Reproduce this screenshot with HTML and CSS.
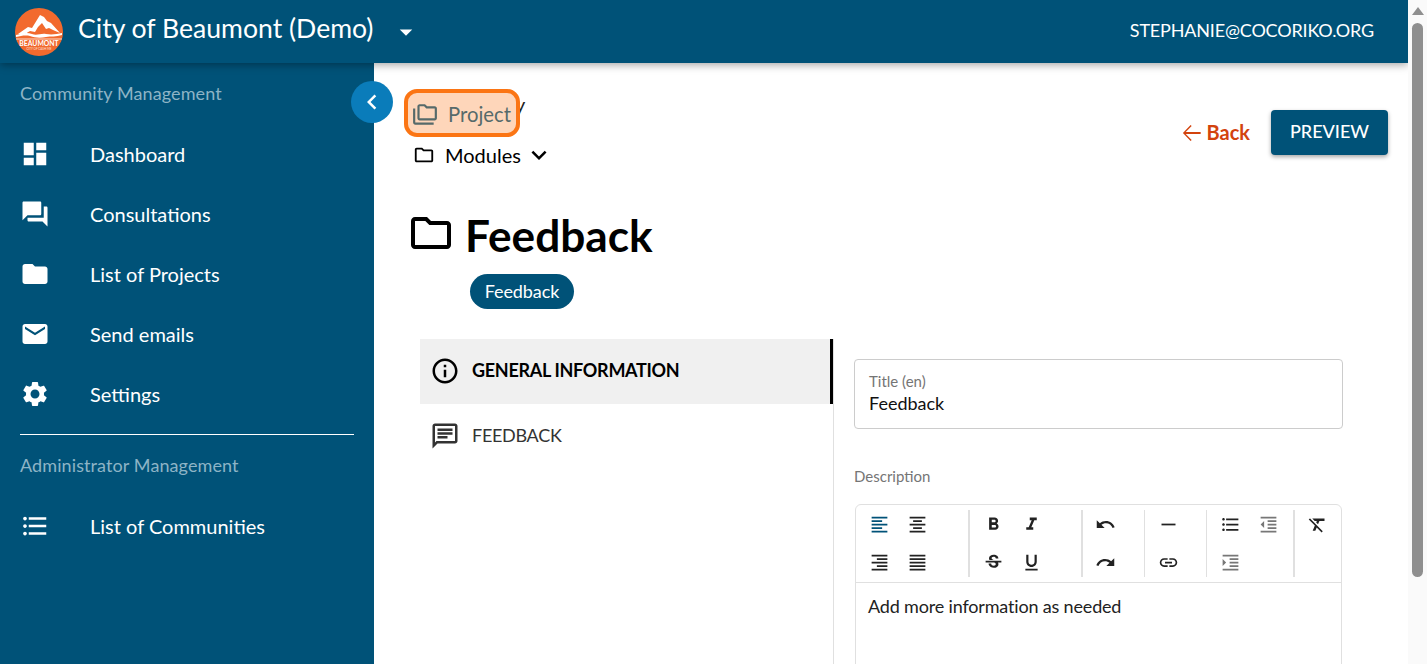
FILE: index.html
```html
<!DOCTYPE html>
<html lang="en">
<head>
<meta charset="utf-8">
<title>City of Beaumont (Demo)</title>
<link rel="stylesheet" href="styles.css">
</head>
<body>
<svg class="sprite" aria-hidden="true">
  <defs>
    <symbol id="i-dashboard" viewBox="0 0 24 24"><path d="M3 13h8V3H3v10zm0 8h8v-6H3v6zm10 0h8V11h-8v10zm0-18v6h8V3h-8z"/></symbol>
    <symbol id="i-forum" viewBox="0 0 24 24"><path d="M21 6h-2v9H6v2c0 .55.45 1 1 1h11l4 4V7c0-.55-.45-1-1-1zm-4 6V3c0-.55-.45-1-1-1H3c-.55 0-1 .45-1 1v14l4-4h10c.55 0 1-.45 1-1z"/></symbol>
    <symbol id="i-folder" viewBox="0 0 24 24"><path d="M10 4H4c-1.1 0-1.99.9-1.99 2L2 18c0 1.1.9 2 2 2h16c1.1 0 2-.9 2-2V8c0-1.1-.9-2-2-2h-8l-2-2z"/></symbol>
    <symbol id="i-folder-o" viewBox="0 0 24 24"><path d="M9.17 6l2 2H20v10H4V6h5.17M10 4H4c-1.1 0-1.99.9-1.99 2L2 18c0 1.1.9 2 2 2h16c1.1 0 2-.9 2-2V8c0-1.1-.9-2-2-2h-8l-2-2z"/></symbol>
    <symbol id="i-folder-copy" viewBox="0 0 24 24"><path d="M3 19h17v2H3c-1.1 0-2-.9-2-2V6h2v13zM23 6v9c0 1.1-.9 2-2 2H7c-1.1 0-2-.9-2-2l.01-11c0-1.1.89-2 1.99-2h5l2 2h7c1.1 0 2 .9 2 2zM7 15h14V6h-7.83l-2-2H7v11z"/></symbol>
    <symbol id="i-email" viewBox="0 0 24 24"><path d="M20 4H4c-1.1 0-1.99.9-1.99 2L2 18c0 1.1.9 2 2 2h16c1.1 0 2-.9 2-2V6c0-1.1-.9-2-2-2zm0 4l-8 5-8-5V6l8 5 8-5v2z"/></symbol>
    <symbol id="i-settings" viewBox="0 0 24 24"><path d="M19.14 12.94c.04-.3.06-.61.06-.94 0-.32-.02-.64-.07-.94l2.03-1.58c.18-.14.23-.41.12-.61l-1.92-3.32c-.12-.22-.37-.29-.59-.22l-2.39.96c-.5-.38-1.03-.7-1.62-.94l-.36-2.54c-.04-.24-.24-.41-.48-.41h-3.84c-.24 0-.43.17-.47.41l-.36 2.54c-.59.24-1.13.57-1.62.94l-2.39-.96c-.22-.08-.47 0-.59.22L2.74 8.87c-.12.21-.08.47.12.61l2.03 1.58c-.05.3-.09.63-.09.94s.02.64.07.94l-2.03 1.58c-.18.14-.23.41-.12.61l1.92 3.32c.12.22.37.29.59.22l2.39-.96c.5.38 1.03.7 1.62.94l.36 2.54c.05.24.24.41.48.41h3.84c.24 0 .44-.17.47-.41l.36-2.54c.59-.24 1.13-.56 1.62-.94l2.39.96c.22.08.47 0 .59-.22l1.92-3.32c.12-.22.07-.47-.12-.61l-2.01-1.58zM12 15.6c-1.98 0-3.6-1.62-3.6-3.6s1.62-3.6 3.6-3.6 3.6 1.62 3.6 3.6-1.62 3.6-3.6 3.6z"/></symbol>
    <symbol id="i-info" viewBox="0 0 24 24"><path d="M11 7h2v2h-2zm0 4h2v6h-2zm1-9C6.48 2 2 6.48 2 12s4.48 10 10 10 10-4.48 10-10S17.52 2 12 2zm0 18c-4.41 0-8-3.59-8-8s3.59-8 8-8 8 3.59 8 8-3.59 8-8 8z"/></symbol>
    <symbol id="i-chat" viewBox="0 0 24 24"><path d="M20 2H4c-1.1 0-2 .9-2 2v18l4-4h14c1.1 0 2-.9 2-2V4c0-1.1-.9-2-2-2zm0 14H5.17L4 17.17V4h16v12zM6 12h8v2H6zm0-3h12v2H6zm0-3h12v2H6z"/></symbol>
    <symbol id="i-chev-left" viewBox="0 0 24 24"><path d="M15.41 7.41L14 6l-6 6 6 6 1.41-1.41L10.83 12z"/></symbol>
    <symbol id="i-expand" viewBox="0 0 24 24"><path d="M16.59 8.59L12 13.17 7.41 8.59 6 10l6 6 6-6z"/></symbol>
    <symbol id="i-caret" viewBox="0 0 24 24"><path d="M7 10l5 5 5-5z"/></symbol>
    <symbol id="i-back" viewBox="0 0 24 24"><path d="M20 11.1H6.2l5.5-5.5-1-1L3.6 12l7.1 7.4 1-1-5.5-5.5H20z"/></symbol>
    <symbol id="t-left" viewBox="0 0 24 24"><path d="M15 15H3v2h12v-2zm0-8H3v2h12V7zM3 13h18v-2H3v2zm0 8h18v-2H3v2zM3 3v2h18V3H3z"/></symbol>
    <symbol id="t-center" viewBox="0 0 24 24"><path d="M7 15v2h10v-2H7zm-4 6h18v-2H3v2zm0-8h18v-2H3v2zm4-6v2h10V7H7zM3 3v2h18V3H3z"/></symbol>
    <symbol id="t-right" viewBox="0 0 24 24"><path d="M3 21h18v-2H3v2zm6-4h12v-2H9v2zm-6-4h18v-2H3v2zm6-4h12V7H9v2zM3 3v2h18V3H3z"/></symbol>
    <symbol id="t-justify" viewBox="0 0 24 24"><path d="M3 21h18v-2H3v2zm0-4h18v-2H3v2zm0-4h18v-2H3v2zm0-4h18V7H3v2zm0-6v2h18V3H3z"/></symbol>
    <symbol id="t-bold" viewBox="0 0 24 24"><path d="M15.6 10.79c.97-.67 1.65-1.77 1.65-2.79 0-2.26-1.75-4-4-4H7v14h7.04c2.09 0 3.71-1.7 3.71-3.79 0-1.52-.86-2.82-2.15-3.42zM10 6.5h3c.83 0 1.5.67 1.5 1.5s-.67 1.5-1.5 1.5h-3v-3zm3.5 9H10v-3h3.5c.83 0 1.5.67 1.5 1.5s-.67 1.5-1.5 1.5z"/></symbol>
    <symbol id="t-italic" viewBox="0 0 24 24"><path d="M10 4v3h2.21l-3.42 8H6v3h8v-3h-2.21l3.42-8H18V4z"/></symbol>
    <symbol id="t-strike" viewBox="0 0 24 24"><path d="M6.85 7.08C6.85 4.37 9.45 3 12.24 3c1.64 0 3 .49 3.9 1.28.77.65 1.46 1.73 1.46 3.24h-3.01c0-.31-.05-.59-.15-.85-.29-.86-1.2-1.28-2.25-1.28-1.86 0-2.34 1.02-2.34 1.7 0 .48.25.88.74 1.21.38.25.77.48 1.41.7H7.39c-.21-.34-.54-.89-.54-1.92zM21 12v-2H3v2h9.62c1.15.45 1.96.75 1.96 1.97 0 1-.81 1.67-2.28 1.67-1.54 0-2.93-.54-2.93-2.51H6.4c0 .55.08 1.13.24 1.58.81 2.29 3.29 3.3 5.67 3.3 2.27 0 5.3-.89 5.3-4.05 0-.3-.01-1.16-.48-1.94H21V12z"/></symbol>
    <symbol id="t-underline" viewBox="0 0 24 24"><path d="M12 17c3.31 0 6-2.69 6-6V3h-2.5v8c0 1.93-1.57 3.5-3.5 3.5S8.5 12.93 8.5 11V3H6v8c0 3.31 2.69 6 6 6zm-7 2v2h14v-2H5z"/></symbol>
    <symbol id="t-undo" viewBox="0 0 24 24"><path d="M12.5 8c-2.65 0-5.05.99-6.9 2.6L2 7v9h9l-3.62-3.62c1.39-1.16 3.16-1.88 5.12-1.88 3.54 0 6.55 2.31 7.6 5.5l2.37-.78C21.08 11.03 17.15 8 12.5 8z"/></symbol>
    <symbol id="t-redo" viewBox="0 0 24 24"><path d="M18.4 10.6C16.55 8.99 14.15 8 11.5 8c-4.65 0-8.58 3.03-9.96 7.22L3.9 16c1.05-3.19 4.05-5.5 7.6-5.5 1.95 0 3.73.72 5.12 1.88L13 16h9V7l-3.6 3.6z"/></symbol>
    <symbol id="t-rule" viewBox="0 0 24 24"><path d="M4 11h16v2H4z"/></symbol>
    <symbol id="t-link" viewBox="0 0 24 24"><path d="M3.9 12c0-1.71 1.39-3.1 3.1-3.1h4V7H7c-2.76 0-5 2.24-5 5s2.24 5 5 5h4v-1.9H7c-1.71 0-3.1-1.39-3.1-3.1zM8 13h8v-2H8v2zm9-6h-4v1.9h4c1.71 0 3.1 1.39 3.1 3.1s-1.39 3.1-3.1 3.1h-4V17h4c2.76 0 5-2.24 5-5s-2.24-5-5-5z"/></symbol>
    <symbol id="t-bullets" viewBox="0 0 24 24"><path d="M4 10.5c-.83 0-1.5.67-1.5 1.5s.67 1.5 1.5 1.5 1.5-.67 1.5-1.5-.67-1.5-1.5-1.5zm0-6c-.83 0-1.5.67-1.5 1.5S3.17 7.5 4 7.5 5.5 6.83 5.5 6 4.83 4.5 4 4.5zm0 12c-.83 0-1.5.68-1.5 1.5s.68 1.5 1.5 1.5 1.5-.68 1.5-1.5-.67-1.5-1.5-1.5zM7 19h14v-2H7v2zm0-6h14v-2H7v2zm0-8v2h14V5H7z"/></symbol>
    <symbol id="t-outdent" viewBox="0 0 24 24"><path d="M11 17h10v-2H11v2zm-8-5l4 4V8l-4 4zm0 9h18v-2H3v2zM3 3v2h18V3H3zm8 6h10V7H11v2zm0 4h10v-2H11v2z"/></symbol>
    <symbol id="t-indent" viewBox="0 0 24 24"><path d="M3 21h18v-2H3v2zM3 8v8l4-4-4-4zm8 9h10v-2H11v2zM3 3v2h18V3H3zm8 6h10V7H11v2zm0 4h10v-2H11v2z"/></symbol>
    <symbol id="t-clear" viewBox="0 0 24 24"><path d="M3.27 5L2 6.27l6.97 6.97L6.5 19h3l1.57-3.66L16.73 21 18 19.73 3.55 5.27 3.27 5zM6 5v.18L8.82 8h2.4l-.72 1.68 2.1 2.1L14.21 8H20V5H6z"/></symbol>
  </defs>
</svg>

<div class="app">
  <header class="topbar">
    <svg class="logo" viewBox="0 0 48 48" aria-hidden="true">
      <circle cx="24" cy="24" r="24" fill="#f26a2e"/>
      <path fill="#fff" d="M3 26 L13 19 L17 20 L25 7 L29 9 L32 13 L36 15 L45 25 L38 22 L34 20 L31 21 L27 15 L23 19 L20 24 L15 23 L10 26 Z"/>
      <path fill="#fff" d="M1 27 C8 25 12 24 17 26 C22 28 26 25 31 26 C37 27 42 26 47 25 L47 27 C41 29 36 28 31 29 C26 30 20 30 15 28 C10 27 6 28 1 29 Z"/>
      <rect x="1" y="30.5" width="46" height="1" fill="#fff" opacity=".75"/>
      <text x="24" y="37.5" text-anchor="middle" class="logo-word">BEAUMONT</text>
      <text x="24" y="41.5" text-anchor="middle" class="logo-tag">CITY OF CASH ME</text>
    </svg>
    <span class="org-name">City of Beaumont (Demo)</span>
    <svg class="org-caret"><use href="#i-caret"/></svg>
    <span class="user-email">STEPHANIE@COCORIKO.ORG</span>
  </header>

  <div class="shell">
    <aside class="sidebar">
      <p class="side-label">Community Management</p>
      <nav class="side-nav">
        <a class="side-item"><svg class="side-icon"><use href="#i-dashboard"/></svg>Dashboard</a>
        <a class="side-item"><svg class="side-icon"><use href="#i-forum"/></svg>Consultations</a>
        <a class="side-item"><svg class="side-icon"><use href="#i-folder"/></svg>List of Projects</a>
        <a class="side-item"><svg class="side-icon"><use href="#i-email"/></svg>Send emails</a>
        <a class="side-item"><svg class="side-icon"><use href="#i-settings"/></svg>Settings</a>
      </nav>
      <hr class="side-rule">
      <p class="side-label side-label-admin">Administrator Management</p>
      <nav class="side-nav">
        <a class="side-item"><svg class="side-icon"><use href="#t-bullets"/></svg>List of Communities</a>
      </nav>
    </aside>

    <button class="collapse" aria-label="Collapse"><svg><use href="#i-chev-left"/></svg></button>

    <main class="main">
      <div class="highlight"><svg class="highlight-icon"><use href="#i-folder-copy"/></svg><span class="highlight-text">Project</span></div>

      <div class="head-row">
        <div class="crumbs">
          <div class="crumb-hidden">y</div>
          <div class="crumb"><svg class="crumb-icon"><use href="#i-folder-o"/></svg><span>Modules</span><svg class="crumb-chev"><use href="#i-expand"/></svg></div>
        </div>
        <div class="actions">
          <a class="back"><svg class="back-icon"><use href="#i-back"/></svg>Back</a>
          <button class="preview">PREVIEW</button>
        </div>
      </div>

      <div class="title-row">
        <svg class="title-icon"><use href="#i-folder-o"/></svg>
        <h1 class="title">Feedback</h1>
      </div>
      <div class="chip">Feedback</div>

      <div class="form-area">
        <div class="tabs">
          <div class="tab tab-active"><svg class="tab-icon"><use href="#i-info"/></svg><span class="tab-text">GENERAL INFORMATION</span></div>
          <div class="tab"><svg class="tab-icon"><use href="#i-chat"/></svg><span class="tab-text">FEEDBACK</span></div>
        </div>
        <div class="fields">
          <div class="field">
            <span class="field-label">Title (en)</span>
            <span class="field-value">Feedback</span>
          </div>
          <div class="desc-label">Description</div>
          <div class="editor">
            <div class="toolbar">
              <div class="tool-group g1">
                <svg class="tool tool-on"><use href="#t-left"/></svg>
                <svg class="tool"><use href="#t-center"/></svg>
                <svg class="tool"><use href="#t-right"/></svg>
                <svg class="tool"><use href="#t-justify"/></svg>
              </div>
              <div class="tool-group g2">
                <svg class="tool"><use href="#t-bold"/></svg>
                <svg class="tool"><use href="#t-italic"/></svg>
                <svg class="tool"><use href="#t-strike"/></svg>
                <svg class="tool"><use href="#t-underline"/></svg>
              </div>
              <div class="tool-group g3">
                <svg class="tool"><use href="#t-undo"/></svg>
                <svg class="tool"><use href="#t-redo"/></svg>
              </div>
              <div class="tool-group g4">
                <svg class="tool"><use href="#t-rule"/></svg>
                <svg class="tool"><use href="#t-link"/></svg>
              </div>
              <div class="tool-group g5">
                <svg class="tool"><use href="#t-bullets"/></svg>
                <svg class="tool tool-dim"><use href="#t-outdent"/></svg>
                <svg class="tool tool-dim"><use href="#t-indent"/></svg>
              </div>
              <div class="tool-group g6">
                <svg class="tool"><use href="#t-clear"/></svg>
              </div>
            </div>
            <div class="editor-body">Add more information as needed</div>
          </div>
        </div>
      </div>
    </main>
  </div>

  <div class="scrollbar"><span class="scroll-up"></span><span class="scroll-thumb"></span></div>
</div>
</body>
</html>
```

FILE: styles.css
```css
* { box-sizing: border-box; }
html, body { margin: 0; height: 100%; overflow: hidden; background: #fff; }
body { font-family: "Lato", "Liberation Sans", sans-serif; color: #000; }
p, h1 { margin: 0; }
svg { fill: currentColor; display: block; flex: none; }
.sprite { width: 0; height: 0; position: absolute; }

.app { position: relative; width: 1427px; height: 664px; overflow: hidden; display: flex; flex-direction: column; }

.topbar { position: relative; z-index: 3; width: 1408px; height: 63px; flex: none; display: flex; align-items: center; background: #005278; color: #fff; box-shadow: 0 2px 8px rgba(0,0,0,.35); padding-left: 15px; }
.logo { width: 48px; height: 48px; }
.logo-word { font: 700 6.8px "Lato", sans-serif; fill: #fff; }
.logo-tag { font: 400 3px "Lato", sans-serif; fill: #fff; opacity: .8; }
.org-name { margin-left: 15px; font-size: 26.6px; line-height: 32px; margin-top: -8px; }
.org-caret { width: 30px; height: 30px; margin-left: 18px; }
.user-email { margin-left: auto; margin-right: 34px; font-size: 18px; letter-spacing: -.18px; margin-top: -4px; }

.shell { flex: 1; min-height: 0; display: flex; position: relative; }

.sidebar { width: 374px; flex: none; background: #005278; color: #fff; padding-top: 18px; }
.side-label { padding-left: 20px; font-size: 18px; letter-spacing: .1px; line-height: 24px; color: #8db4c6; }
.side-label-admin { margin-top: 18px; }
.side-nav { display: flex; flex-direction: column; margin-top: 19px; }
.side-item { display: flex; align-items: center; height: 60px; padding-left: 20px; font-size: 20px; }
.side-icon { width: 30px; height: 30px; margin-right: 40px; }
.side-rule { margin: 10px 20px 0; border: 0; height: 1px; background: #fff; }

.collapse { position: absolute; z-index: 2; left: 351px; top: 18px; width: 42px; height: 42px; padding: 0; border: 0; border-radius: 50%; background: #0a7cba; color: #fff; display: flex; align-items: center; justify-content: center; }
.collapse svg { width: 30px; height: 30px; }

.main { position: relative; flex: 1; min-width: 0; padding-right: 39px; }

.highlight { position: absolute; z-index: 1; left: 30px; top: 26px; width: 116px; height: 48px; border: 4px solid #fb7514; border-radius: 13px; background: #fed6ba; color: #566a6a; display: flex; align-items: center; font-size: 20.3px; padding-left: 4px; }
.highlight-icon { width: 26px; height: 26px; margin: 4px 10px 0 0; }
.highlight-text { margin-top: 2px; }

.head-row { display: flex; justify-content: space-between; }
.crumbs { padding-left: 39px; }
.crumb-hidden { height: 75px; padding: 29px 0 0 102px; font-size: 20px; line-height: 24px; color: #222; }
.crumb { display: flex; align-items: center; height: 34px; font-size: 20px; }
.crumb-icon { width: 22px; height: 22px; margin: -1px 10px 0 0; }
.crumb-chev { width: 30px; height: 30px; margin-left: 3px; }

.actions { display: flex; align-items: center; gap: 21px; padding-top: 47px; height: 92px; }
.back { display: flex; align-items: center; font-size: 20px; font-weight: 700; color: #d3430d; margin-top: -2px; }
.back-icon { width: 26px; height: 26px; margin: 3px 2px 0 0; }
.preview { width: 117px; height: 45px; border: 0; border-radius: 4px; padding: 0 0 3px; background: #005278; color: #fff; font: 500 18px "Lato", sans-serif; box-shadow: 0 2px 4px rgba(0,0,0,.35); }

.title-row { display: flex; align-items: center; margin-top: 33px; padding-left: 33px; height: 60px; }
.title-icon { width: 48px; height: 48px; margin: -4px 10px 0 0; }
.title { font-size: 44.2px; font-weight: 700; line-height: 60px; }

.chip { margin: 9px 0 0 96px; width: 104px; height: 35px; padding-bottom: 2px; border-radius: 18px; background: #005278; color: #fff; font-size: 18px; letter-spacing: -.1px; display: flex; align-items: center; justify-content: center; }

.form-area { display: flex; margin: 30px 0 0 46px; }
.tabs { width: 414px; flex: none; border-right: 1px solid #e0e0e0; height: 400px; }
.tab { display: flex; align-items: center; height: 65px; padding-left: 10px; font-size: 18px; letter-spacing: -.3px; color: #333; }
.tab-active { background: #f0f0f0; color: #000; font-weight: 700; border-right: 3px solid #000; }
.tab-icon { width: 30px; height: 30px; margin: -1px 13px 0 0; }
.tab-text { margin-top: -3px; margin-left: -1px; }

.fields { width: 489px; margin-left: 20px; padding-top: 20px; }
.field { height: 70px; border: 1px solid #ccc; border-radius: 4px; padding: 13px 14px 0; display: flex; flex-direction: column; }
.field-label { font-size: 15px; line-height: 17px; color: #757575; }
.field-value { font-size: 18px; line-height: 24px; margin-top: 1px; color: #111; }
.desc-label { margin-top: 37px; font-size: 15px; line-height: 20px; color: #757575; }
.editor { margin: 18px 1px 0; border: 1px solid #e0e0e0; border-radius: 6px; }
.toolbar { display: flex; height: 78px; border-bottom: 1px solid #e0e0e0; padding-top: 5px; }
.tool-group { display: grid; grid-template-columns: repeat(auto-fill, 38px); grid-template-rows: 29px 29px; row-gap: 9px; height: 67px; border-right: 2px solid #e0e0e0; justify-items: center; align-items: center; }
.tool { width: 21px; height: 21px; color: #222; }
.tool-on { color: #005278; }
.tool-dim { color: #777; }
.g1 { width: 114px; padding-left: 4px; }
.g2 { width: 113px; padding-left: 4px; }
.g3 { width: 62px; padding-left: 3px; border-right-width: 1px; }
.g4 { width: 62px; padding-left: 4px; border-right-width: 1px; }
.g5 { width: 88px; padding-left: 4px; }
.g6 { width: 46px; padding-left: 3px; border-right: 0; }
.editor-body { padding: 11px 12px 0; font-size: 18px; letter-spacing: -.17px; line-height: 24px; color: #222; height: 120px; }

.scrollbar { position: absolute; z-index: 4; right: 0; top: 0; bottom: 0; width: 19px; background: #fafafa; }
.scroll-up { position: absolute; left: 4px; top: 7px; width: 0; height: 0; border: 6px solid transparent; border-top: 0; border-bottom: 8px solid #8f8f8f; }
.scroll-thumb { position: absolute; left: 4px; top: 23px; width: 11px; height: 554px; border-radius: 6px; background: #8f8f8f; }
```
